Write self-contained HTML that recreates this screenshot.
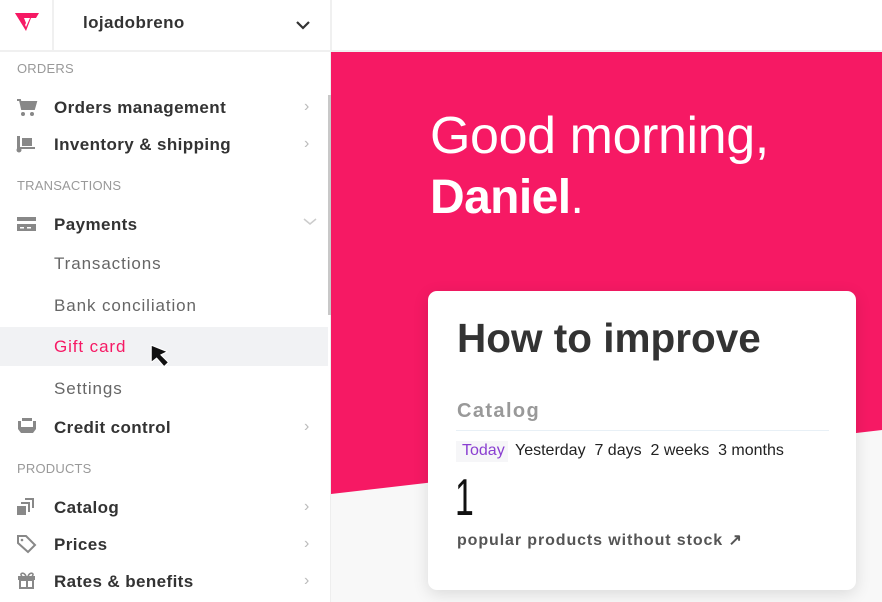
<!DOCTYPE html>
<html><head><meta charset="utf-8"><style>
*{margin:0;padding:0;box-sizing:border-box}
body{width:882px;height:602px;overflow:hidden;background:#f8f8f8;font-family:"Liberation Sans",sans-serif;position:relative}
.a{position:absolute}
.side{left:0;top:0;width:331px;height:602px;background:#fff;border-right:1px solid #eee}
.hdr{left:0;top:0;width:882px;height:52px;background:#fff;border-bottom:2px solid #f0f0f0}
.sec{left:17px;font-size:13px;color:#999;letter-spacing:0.2px}
.it{left:54px;font-size:17px;font-weight:bold;color:#333;letter-spacing:0.4px}
.sub{left:54px;font-size:17px;color:#666;letter-spacing:0.9px}
.chev{left:304px;color:#bbb;font-size:16px}
.ic{left:16px;width:22px;height:20px}
</style></head><body>
<svg class="a" style="left:331px;top:52px" width="551" height="450"><polygon points="0,0 551,0 551,378 0,442" fill="#f61964"/></svg>
<div class="a side"></div>
<div class="a hdr"></div>
<div class="a" style="left:52px;top:0;width:2px;height:52px;background:#f0f0f0"></div>
<div class="a" style="left:330px;top:0;width:2px;height:52px;background:#f0f0f0"></div>
<svg class="a" style="left:14px;top:12px" width="26" height="20" viewBox="0 0 26 20"><polygon points="1,1 25,1 22,6 17,6 12,19" fill="#f61964"/><polygon points="8,6 16,6 12,15" fill="#fff"/><polygon points="1,1 8,1 12,11 10,15" fill="#f61964"/></svg>
<div class="a" style="left:83px;top:13px;font-size:17px;color:#333;font-weight:bold;letter-spacing:0.4px">lojadobreno</div>
<svg class="a" style="left:295px;top:19px" width="16" height="12"><path d="M2 3 L8 9 L14 3" stroke="#333" stroke-width="2.2" fill="none"/></svg>
<div class="a" style="left:328px;top:95px;width:3px;height:220px;background:#c8c8c8"></div>

<div class="a sec" style="top:61px">ORDERS</div>
<svg class="a ic" style="top:98px" viewBox="0 0 22 20"><path d="M1 2h3l2 9h12l2-7H5" fill="#888" stroke="#888" stroke-width="2"/><circle cx="7" cy="16" r="2" fill="#888"/><circle cx="16" cy="16" r="2" fill="#888"/></svg>
<div class="a it" style="top:98px">Orders management</div><div class="a chev" style="top:98px">&#x203A;</div>
<svg class="a ic" style="top:134px" viewBox="0 0 22 20"><rect x="1" y="2" width="3" height="13" fill="#888"/><rect x="6" y="4" width="10" height="8" fill="#888"/><rect x="1" y="13" width="18" height="2" fill="#888"/><circle cx="3" cy="16" r="2.5" fill="#888"/></svg>
<div class="a it" style="top:135px">Inventory &amp; shipping</div><div class="a chev" style="top:135px">&#x203A;</div>
<div class="a sec" style="top:178px">TRANSACTIONS</div>
<svg class="a ic" style="top:215px" viewBox="0 0 22 20"><rect x="1" y="2" width="19" height="14" fill="#888"/><rect x="1" y="6" width="19" height="3" fill="#fff"/><rect x="4" y="12" width="4" height="1.5" fill="#fff"/><rect x="11" y="12" width="4" height="1.5" fill="#fff"/></svg>
<div class="a it" style="top:215px">Payments</div>
<svg class="a" style="left:303px;top:217px" width="14" height="10"><path d="M1 2l6 5 6-5" stroke="#ccc" stroke-width="1.5" fill="none"/></svg>
<div class="a sub" style="top:254px">Transactions</div>
<div class="a sub" style="top:296px">Bank conciliation</div>
<div class="a" style="left:0;top:327px;width:328px;height:39px;background:#f1f2f4"></div>
<div class="a sub" style="top:337px;color:#f61964">Gift card</div>
<svg class="a" style="left:148px;top:343px" width="28" height="28" viewBox="0 0 26 26"><path d="M3 2 L3 18 L8 14 L15 22 L19 18 L12 11 L18 8 Z" fill="#111" stroke="#fff" stroke-width="1"/></svg>
<div class="a sub" style="top:379px">Settings</div>
<svg class="a ic" style="top:418px" viewBox="0 0 22 20"><path d="M2 3h18v8l-3 4H5l-3-4z" fill="#888"/><rect x="5" y="3" width="12" height="6" fill="#fff"/><rect x="6" y="0" width="10" height="3" fill="#888"/></svg>
<div class="a it" style="top:418px">Credit control</div><div class="a chev" style="top:418px">&#x203A;</div>
<div class="a sec" style="top:461px">PRODUCTS</div>
<svg class="a ic" style="top:497px" viewBox="0 0 22 20"><rect x="1" y="9" width="9" height="9" fill="#888"/><path d="M5 6h8v9M9 2h8v9" stroke="#888" stroke-width="2" fill="none"/></svg>
<div class="a it" style="top:498px">Catalog</div><div class="a chev" style="top:498px">&#x203A;</div>
<svg class="a ic" style="top:534px" viewBox="0 0 22 20"><path d="M2 2h8l9 9-7 7-10-9z" stroke="#888" stroke-width="2" fill="none"/><circle cx="6" cy="6" r="1.3" fill="#888"/></svg>
<div class="a it" style="top:535px">Prices</div><div class="a chev" style="top:535px">&#x203A;</div>
<svg class="a ic" style="top:570px" viewBox="0 0 22 20"><rect x="2" y="6" width="17" height="4" fill="#888"/><rect x="4" y="10" width="13" height="8" fill="none" stroke="#888" stroke-width="2"/><rect x="10" y="6" width="2" height="12" fill="#888"/><path d="M10 6c-3-5-7-2-4 0M12 6c3-5 7-2 4 0" stroke="#888" stroke-width="1.6" fill="none"/></svg>
<div class="a it" style="top:572px">Rates &amp; benefits</div><div class="a chev" style="top:572px">&#x203A;</div>

<div class="a" style="left:430px;top:106px;color:#fff;font-size:52px;letter-spacing:-0.4px">Good morning,</div>
<div class="a" style="left:430px;top:170px;color:#fff;font-size:48px;font-weight:bold;letter-spacing:-0.6px">Daniel<span style="font-weight:normal">.</span></div>

<div class="a" style="left:428px;top:291px;width:428px;height:299px;background:#fff;border-radius:9px;box-shadow:0 4px 16px rgba(0,0,0,0.12)"></div>
<div class="a" style="left:457px;top:315px;font-size:40.5px;font-weight:bold;color:#333">How to improve</div>
<div class="a" style="left:457px;top:400px;font-size:20px;font-weight:bold;color:#999;letter-spacing:1.4px">Catalog</div>
<div class="a" style="left:456px;top:430px;width:373px;height:1px;background:#e8f0f6"></div>
<div class="a" style="left:456px;top:441px;width:52px;height:21px;background:#f6f6f8"></div>
<div class="a" style="left:462px;top:442px;font-size:16px;color:#8a3fd1">Today</div>
<div class="a" style="left:515px;top:442px;font-size:16px;color:#222;white-space:pre">Yesterday  7 days  2 weeks  3 months</div>
<div class="a" style="left:455px;top:468px;font-size:52px;color:#111;font-weight:300;transform:scaleX(0.65);transform-origin:left">1</div>
<div class="a" style="left:457px;top:530px;font-size:16px;font-weight:bold;color:#555;letter-spacing:0.9px">popular products without stock &#x2197;</div>
</body></html>
